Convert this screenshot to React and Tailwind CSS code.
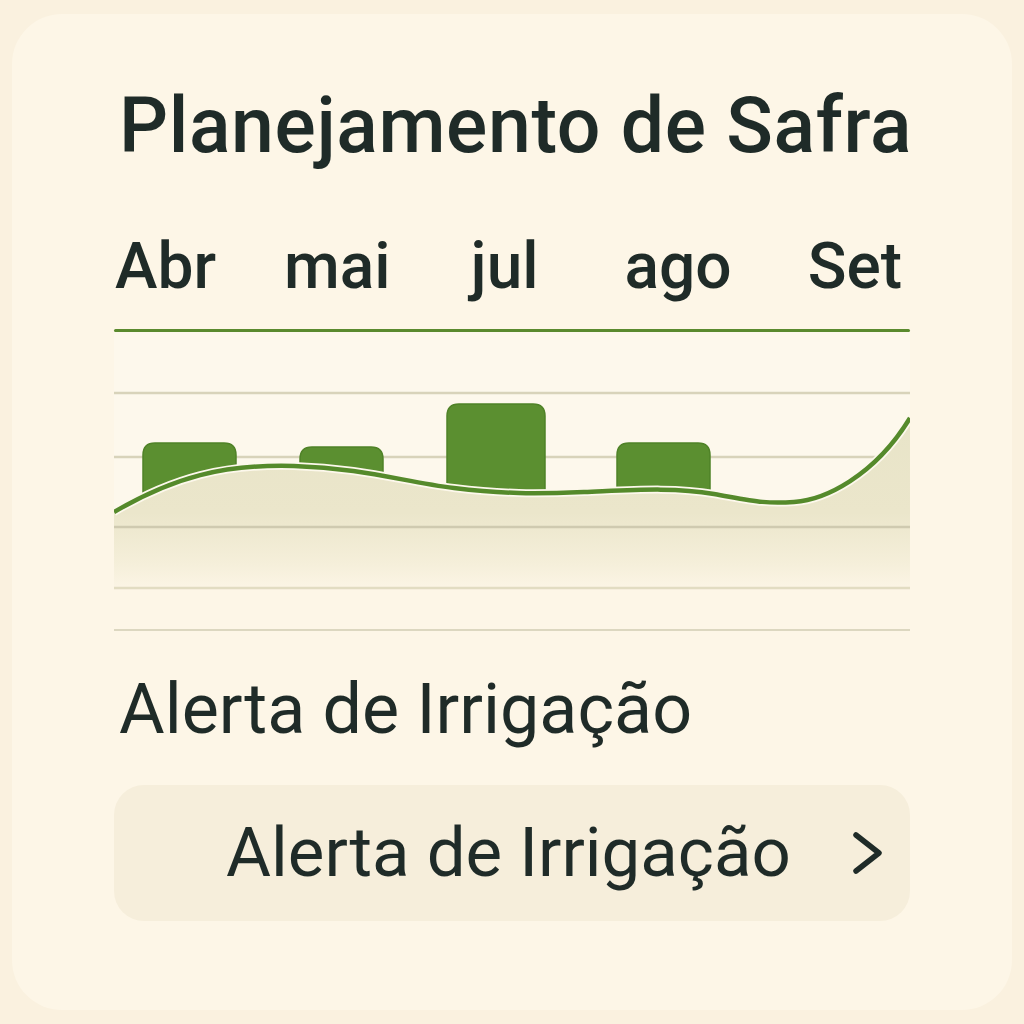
const MONTHS = [
  { label: 'Abr', cls: '' },
  { label: 'mai', cls: 'ml-[68px]' },
  { label: 'jul', cls: 'ml-[80px]' },
  { label: 'ago', cls: 'ml-[86px]' },
  { label: 'Set', cls: 'ml-[76px]' },
]

// chart coords: x 0..796 (page 114..910), y 0..300 (page 332..632)
const BARS = [
  { x: 29, w: 93, top: 111 },
  { x: 186, w: 83, top: 115 },
  { x: 333, w: 98, top: 72 },
  { x: 503, w: 93, top: 111 },
]

const CURVE =
  'M0 180 C 60 145, 110 132, 180 134 S 290 150, 340 156 S 420 162, 470 160 S 560 155, 600 162 S 650 172, 680 170 S 760 145, 796 86'

function Chart() {
  return (
    <svg width="796" height="300" viewBox="0 0 796 300" className="block">
      <defs>
        <linearGradient id="fill" x1="0" y1="0" x2="0" y2="1">
          <stop offset="0" stopColor="#e8e4c8" />
          <stop offset="0.55" stopColor="#ebe6cb" />
          <stop offset="0.85" stopColor="#f5efda" />
          <stop offset="1" stopColor="#fcf5e6" />
        </linearGradient>
      </defs>
      <rect x="0" y="0" width="796" height="258" fill="#fdf8ec" />
      <line x1="0" y1="61" x2="796" y2="61" stroke="#d8d3ba" strokeWidth="2.5" />
      <line x1="0" y1="125" x2="796" y2="125" stroke="#d8d3ba" strokeWidth="2.5" />
      {BARS.map((b) => (
        <path
          key={b.x}
          d={`M${b.x} 200 V${b.top + 12} Q${b.x} ${b.top} ${b.x + 12} ${b.top} H${b.x + b.w - 12} Q${b.x + b.w} ${b.top} ${b.x + b.w} ${b.top + 12} V200 Z`}
          fill="#5b8f30"
          stroke="#4f8227"
          strokeWidth="1.5"
        />
      ))}
      <path d={`${CURVE} V258 H0 Z`} fill="url(#fill)" />
      <line x1="0" y1="195" x2="796" y2="195" stroke="#cfcab0" strokeWidth="2.5" />
      <line x1="0" y1="256" x2="796" y2="256" stroke="#e2dcc2" strokeWidth="2.5" />
      <path d={CURVE} fill="none" stroke="#fdf8ec" strokeWidth="8" />
      <path d={CURVE} fill="none" stroke="#558a2b" strokeWidth="4.5" />
      <line x1="0" y1="298" x2="796" y2="298" stroke="#dcd7c0" strokeWidth="2" />
    </svg>
  )
}

function Chevron() {
  return (
    <svg width="36" height="44" viewBox="0 0 36 44" fill="none" stroke="#1f2b28" strokeWidth="5.5" strokeLinecap="round" strokeLinejoin="round">
      <path d="M6 4 L29 22 L6 40" />
    </svg>
  )
}

export default function App() {
  return (
    <div className="h-[1024px] w-full bg-[#faf1df] p-[12px] pt-[14px] font-['Roboto',sans-serif] text-[#1f2b28]">
      <div className="h-[996px] rounded-[50px] bg-[#fdf6e7] px-[102px] pt-[67px]">
        <h1 className="whitespace-nowrap pl-[5px] text-[77px] font-medium leading-[90px] tracking-[0.6px]">Planejamento de Safra</h1>

        <div className="mt-[59px] flex pl-[1px] text-[64px] font-medium leading-[74px]">
          {MONTHS.map((m) => (
            <span key={m.label} className={m.cls}>{m.label}</span>
          ))}
        </div>

        <div className="mt-[25px] h-[3px] rounded-full bg-[#5a8a2e]" />
        <Chart />

        <h2 className="mt-[37px] pl-[5px] text-[70px] font-normal leading-[80px]">Alerta de Irrigação</h2>

        <button className="mt-[36px] flex h-[136px] w-full items-center rounded-[30px] bg-[#f6eedb] pl-[112px] pr-[24px]">
          <span className="flex-1 text-left text-[69px] font-normal leading-[80px]">Alerta de Irrigação</span>
          <Chevron />
        </button>
      </div>
    </div>
  )
}
